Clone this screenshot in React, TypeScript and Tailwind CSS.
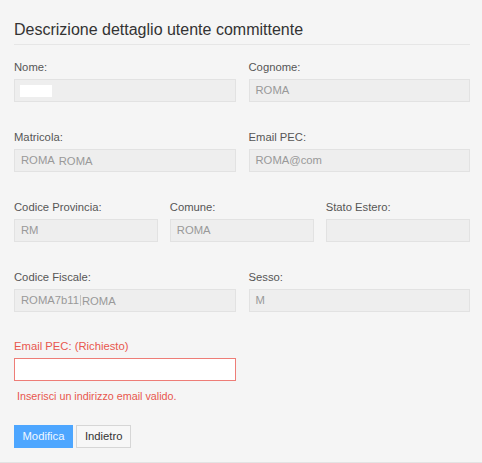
import React from "react";

const font = { fontFamily: '"Liberation Sans", Arial, sans-serif' };

function Label({ children }: { children: React.ReactNode }) {
  return <div className="h-[15px] leading-[15px] text-[11.25px] text-[#555555] mb-[4px] whitespace-nowrap">{children}</div>;
}

function Field({ children }: { children?: React.ReactNode }) {
  return (
    <div className="h-[23px] bg-[#eeeeee] border border-[#e2e2e2] flex items-center px-[6px] text-[11.25px] text-[#999999] leading-[15px] whitespace-nowrap">
      {children}
    </div>
  );
}

export default function App() {
  return (
    <div style={font} className="w-[482px] h-[463px] bg-[#f5f5f5] border-b border-[#e3e3e3] pl-[14px] pr-[12px] pt-[20px]">
      <div className="text-[16px] leading-[20px] text-[#333333] pb-[4px] border-b border-[#e6e6e6]">
        Descrizione dettaglio utente committente
      </div>

      <div className="grid grid-cols-2 gap-x-[13px] mt-[15px]">
        <div>
          <Label>Nome:</Label>
          <Field>
            <div className="w-[32px] h-[12px] bg-white -ml-[1px]" />
          </Field>
        </div>
        <div>
          <Label>Cognome:</Label>
          <Field>ROMA</Field>
        </div>
      </div>

      <div className="grid grid-cols-2 gap-x-[13px] mt-[28px]">
        <div>
          <Label>Matricola:</Label>
          <Field>
            <span>ROMA</span>
            <span className="ml-[4px] mt-[2px]">ROMA</span>
          </Field>
        </div>
        <div>
          <Label>Email PEC:</Label>
          <Field>ROMA@com</Field>
        </div>
      </div>

      <div className="grid grid-cols-3 gap-x-[11.5px] mt-[28px]">
        <div>
          <Label>Codice Provincia:</Label>
          <Field>RM</Field>
        </div>
        <div>
          <Label>Comune:</Label>
          <Field>ROMA</Field>
        </div>
        <div>
          <Label>Stato Estero:</Label>
          <Field />
        </div>
      </div>

      <div className="grid grid-cols-2 gap-x-[13px] mt-[28px]">
        <div>
          <Label>Codice Fiscale:</Label>
          <Field>
            <span>ROMA7b11</span>
            <span className="inline-block w-px h-[11px] bg-[#c4c4c4] mx-[1px]" />
            <span className="mt-[2px]">ROMA</span>
          </Field>
        </div>
        <div>
          <Label>Sesso:</Label>
          <Field>M</Field>
        </div>
      </div>

      <div className="grid grid-cols-2 gap-x-[13px] mt-[27px]">
        <div>
          <div className="h-[15px] leading-[15px] text-[11.25px] text-[#e8574e] mb-[4px]">Email PEC: (Richiesto)</div>
          <div className="h-[23px] bg-white border border-[#ee7d77]" />
        </div>
      </div>

      <div className="mt-[8px] ml-[3px] h-[15px] leading-[15px] text-[10.75px] text-[#e8574e]">
        Inserisci un indirizzo email valido.
      </div>

      <div className="flex gap-[3px] mt-[21px]">
        <button className="h-[23px] px-[7.5px] bg-[#4da6ff] border border-[#4da6ff] text-[#f0f8ff] text-[11.25px] leading-[15px]">
          Modifica
        </button>
        <button className="h-[23px] px-[8px] bg-[#f7f7f7] border border-[#d6d6d6] text-[#333333] text-[11.25px] leading-[15px]">
          Indietro
        </button>
      </div>
    </div>
  );
}
